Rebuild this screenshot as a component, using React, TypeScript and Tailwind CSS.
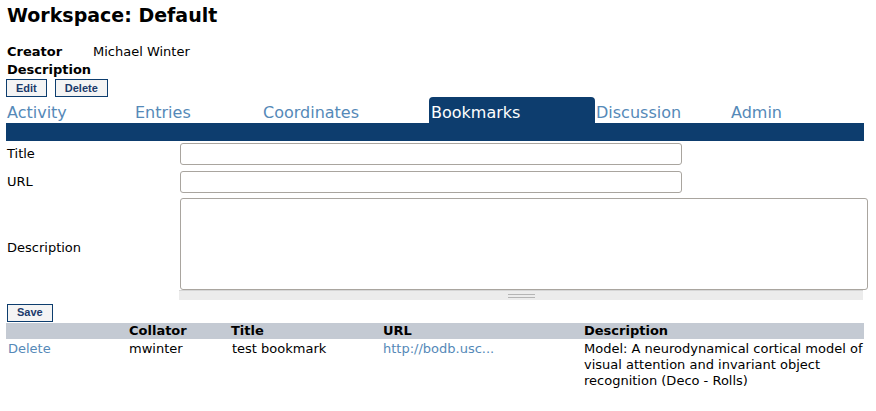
const tabs = [
  { label: 'Activity', w: 'w-[128px]' },
  { label: 'Entries', w: 'w-[128px]' },
  { label: 'Coordinates', w: 'w-[167px]' },
  { label: 'Bookmarks', w: 'w-[166px]', active: true },
  { label: 'Discussion', w: 'w-[135px]' },
  { label: 'Admin', w: 'w-[128px]' },
];

function Btn({ children }: { children: string }) {
  return (
    <button className="h-[18px] px-[9px] border border-[#0d3d6e] bg-[#f4f4f4] text-[#1b3a6b] text-[11px] font-bold leading-none font-['Liberation_Sans',Arial,sans-serif]">
      {children}
    </button>
  );
}

export default function App() {
  return (
    <div className="min-h-screen bg-white text-black text-[13px] font-['DejaVu_Sans',sans-serif] pl-[6px] pr-[12px]">
      <h1 className="pt-[3px] pl-px text-[19px] font-bold leading-[24px]">Workspace: Default</h1>

      <div className="mt-[16px] pl-px">
        <div className="flex h-[18px] items-center">
          <span className="w-[86px] font-bold">Creator</span>
          <span>Michael Winter</span>
        </div>
        <div className="flex h-[18px] items-center font-bold">Description</div>
      </div>

      <div className="flex gap-[8px]">
        <Btn>Edit</Btn>
        <Btn>Delete</Btn>
      </div>

      <div className="flex h-[26px] items-end">
        {tabs.map((t) => (
          <div
            key={t.label}
            className={`${t.w} h-[26px] flex items-center text-[16px] leading-none pt-[6px] ${
              t.active ? 'bg-[#0d3d6e] text-white rounded-t-[4px] pl-[2px]' : 'text-[#5589b8] pl-[1px]'
            }`}
          >
            {t.label}
          </div>
        ))}
      </div>
      <div className="w-[858px] h-[18px] bg-[#0d3d6e]" />

      <div className="grid grid-cols-[173px_1fr] items-center pl-px mt-[2px]">
        <label className="leading-[22px]">Title</label>
        <input className="w-[502px] h-[22px] border border-[#a9a59f] rounded-[3px] bg-white" />
        <label className="mt-[6px] leading-[22px]">URL</label>
        <input className="mt-[6px] w-[502px] h-[22px] border border-[#a9a59f] rounded-[3px] bg-white" />
        <label className="mt-[5px] leading-[22px] self-start pt-[39px]">Description</label>
        <div className="mt-[5px] w-[688px]">
          <textarea className="block w-[688px] h-[92px] border border-[#a9a59f] rounded-[3px] bg-white resize-none" />
          <div className="ml-[-1px] w-[684px] h-[10px] bg-[#ececec] border-t border-[#d6d6d6] flex flex-col items-center justify-center gap-[2px]">
            <div className="w-[27px] h-px bg-[#b5b5b5]" />
            <div className="w-[27px] h-px bg-[#b5b5b5]" />
          </div>
        </div>
      </div>

      <div className="mt-[2px] pl-px">
        <Btn>Save</Btn>
      </div>

      <table className="mt-[1px] w-[858px] border-collapse table-fixed">
        <thead>
          <tr className="bg-[#c4cad3] h-[16px]">
            <th className="w-[121px] p-0" />
            <th className="w-[102px] p-0 pl-[2px] text-left font-bold leading-[16px]">Collator</th>
            <th className="w-[153px] p-0 pl-[2px] text-left font-bold leading-[16px]">Title</th>
            <th className="w-[201px] p-0 pl-[1px] text-left font-bold leading-[16px]">URL</th>
            <th className="p-0 pl-[1px] text-left font-bold leading-[16px]">Description</th>
          </tr>
        </thead>
        <tbody>
          <tr className="align-top">
            <td className="pt-[2px] pl-[2px] leading-[16px] text-[#5589b8]">Delete</td>
            <td className="pt-[2px] pl-[2px] leading-[16px]">mwinter</td>
            <td className="pt-[2px] pl-[3px] leading-[16px]">test bookmark</td>
            <td className="pt-[2px] pl-[1px] leading-[16px] text-[#5589b8]">http://bodb.usc...</td>
            <td className="pt-[2px] pl-[1px] leading-[16px]">
              Model: A neurodynamical cortical model of visual attention and invariant object recognition (Deco - Rolls)
            </td>
          </tr>
        </tbody>
      </table>
    </div>
  );
}
